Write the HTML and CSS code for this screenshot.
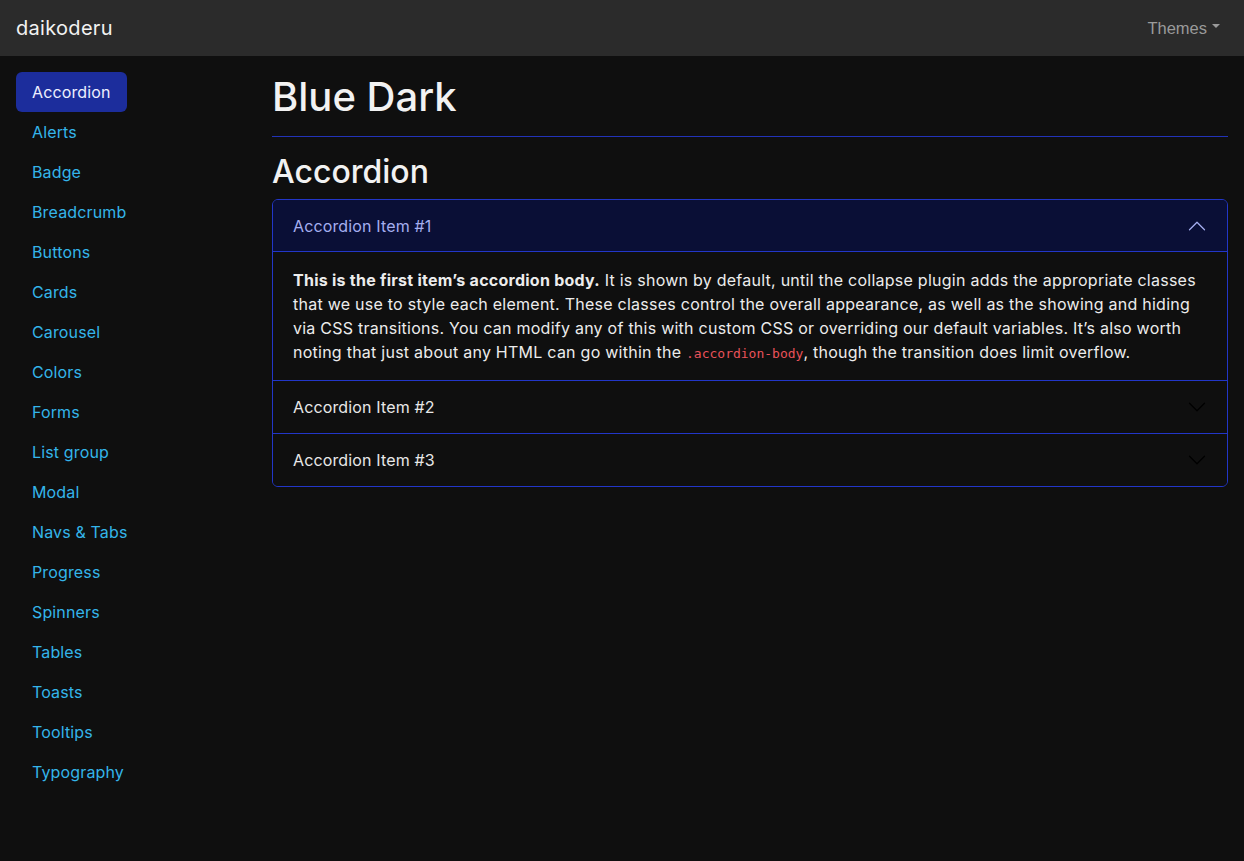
FILE: index.html
```html
<!DOCTYPE html>
<html lang="en">
<head>
<meta charset="utf-8">
<title>daikoderu - Blue Dark</title>
<link rel="stylesheet" href="styles.css">
</head>
<body>
<header class="navbar">
  <a class="brand" href="#">daikoderu</a>
  <a class="themes" href="#">Themes<span class="caret"></span></a>
</header>
<div class="layout">
  <nav class="sidebar">
    <a class="nav-link active" href="#">Accordion</a>
    <a class="nav-link" href="#">Alerts</a>
    <a class="nav-link" href="#">Badge</a>
    <a class="nav-link" href="#">Breadcrumb</a>
    <a class="nav-link" href="#">Buttons</a>
    <a class="nav-link" href="#">Cards</a>
    <a class="nav-link" href="#">Carousel</a>
    <a class="nav-link" href="#">Colors</a>
    <a class="nav-link" href="#">Forms</a>
    <a class="nav-link" href="#">List group</a>
    <a class="nav-link" href="#">Modal</a>
    <a class="nav-link" href="#">Navs &amp; Tabs</a>
    <a class="nav-link" href="#">Progress</a>
    <a class="nav-link" href="#">Spinners</a>
    <a class="nav-link" href="#">Tables</a>
    <a class="nav-link" href="#">Toasts</a>
    <a class="nav-link" href="#">Tooltips</a>
    <a class="nav-link" href="#">Typography</a>
  </nav>
  <main class="main">
    <h1 class="title">Blue Dark</h1>
    <hr class="rule">
    <h2 class="section-title">Accordion</h2>
    <div class="accordion">
      <div class="acc-item">
        <button class="acc-header open">
          <span>Accordion Item #1</span>
          <svg class="chev" width="20" height="20" viewBox="0 0 16 16"><path d="M2 11L8 5L14 11" fill="none" stroke="currentColor" stroke-width="1" stroke-linecap="round" stroke-linejoin="round"/></svg>
        </button>
        <div class="acc-body">
          <strong>This is the first item’s accordion body.</strong> It is shown by default, until the collapse plugin adds the appropriate classes that we use to style each element. These classes control the overall appearance, as well as the showing and hiding via CSS transitions. You can modify any of this with custom CSS or overriding our default variables. It’s also worth noting that just about any HTML can go within the <code>.accordion-body</code>, though the transition does limit overflow.
        </div>
      </div>
      <div class="acc-item">
        <button class="acc-header">
          <span>Accordion Item #2</span>
          <svg class="chev dark" width="20" height="20" viewBox="0 0 16 16"><path d="M2 5L8 11L14 5" fill="none" stroke="currentColor" stroke-width="1" stroke-linecap="round" stroke-linejoin="round"/></svg>
        </button>
      </div>
      <div class="acc-item">
        <button class="acc-header">
          <span>Accordion Item #3</span>
          <svg class="chev dark" width="20" height="20" viewBox="0 0 16 16"><path d="M2 5L8 11L14 5" fill="none" stroke="currentColor" stroke-width="1" stroke-linecap="round" stroke-linejoin="round"/></svg>
        </button>
      </div>
    </div>
  </main>
</div>
</body>
</html>
```
FILE: styles.css
```css
* { box-sizing: border-box; }
html, body { margin: 0; padding: 0; }
body {
  background: #0f0f0f;
  color: #e8e8e8;
  font-family: Inter, "DejaVu Sans", sans-serif;
  font-size: 16px;
  line-height: 24px;
  letter-spacing: 0.14px;
  min-height: 861px;
}
a { text-decoration: none; }

.navbar {
  height: 56px;
  background: #2b2b2b;
  display: flex;
  align-items: center;
  justify-content: space-between;
  padding: 0 24px 0 16px;
}
.brand {
  color: #f2f2f2;
  font-size: 20px;
  letter-spacing: 0.3px;
}
.themes {
  color: #9a9a9a;
  font-family: "Liberation Sans", Arial, sans-serif;
  font-size: 16.5px;
  letter-spacing: 0;
  display: flex;
  align-items: center;
}
.caret {
  display: inline-block;
  margin-left: 5px;
  border-top: 4px solid #9a9a9a;
  border-left: 4px solid transparent;
  border-right: 4px solid transparent;
  margin-top: -4px;
}

.layout {
  display: flex;
  padding: 16px 16px 0 16px;
}
.sidebar {
  width: 256px;
  flex: none;
  display: flex;
  flex-direction: column;
  align-items: flex-start;
}
.nav-link {
  display: block;
  padding: 8px 16px;
  color: #34b5ea;
  font-size: 16px;
  line-height: 24px;
  border-radius: 6px;
}
.nav-link.active {
  background: #1c2d9c;
  color: #eef0ff;
}

.main {
  flex: 1;
  min-width: 0;
}
.title {
  margin: 0;
  font-size: 40px;
  line-height: 48px;
  font-weight: 500;
  color: #f2f2f2;
  padding-top: 1px;
  letter-spacing: 0;
}
.rule {
  border: 0;
  border-top: 1px solid #2233b8;
  margin: 15px 0 16px;
}
.section-title {
  margin: 0 0 8px;
  font-size: 32px;
  line-height: 38px;
  font-weight: 500;
  color: #f2f2f2;
  letter-spacing: 0;
}

.accordion {
  border: 1px solid #2236c8;
  border-radius: 6px;
  overflow: hidden;
}
.acc-item + .acc-item { border-top: 1px solid #2236c8; }
.acc-header {
  width: 100%;
  display: flex;
  align-items: center;
  justify-content: space-between;
  padding: 14px 20px;
  height: 52px;
  background: #0f0f0f;
  color: #e8e8e8;
  border: 0;
  font: inherit;
  letter-spacing: inherit;
  font-size: 16px;
  text-align: left;
  cursor: pointer;
}
.acc-header.open {
  background: #0a0f36;
  color: #a5aef0;
  border-bottom: 1px solid #2236c8;
}
.chev { color: #a5aef0; flex: none; }
.chev.dark { color: #000; }
.acc-body {
  padding: 16px 20px;
  font-size: 16px;
  line-height: 24px;
  letter-spacing: 0.25px;
  color: #ececec;
}
.acc-body strong { font-weight: 700; }
code {
  font-family: "DejaVu Sans Mono", "Liberation Mono", monospace;
  font-size: 13px;
  line-height: 1;
  letter-spacing: 0;
  color: #e8525a;
}
```
